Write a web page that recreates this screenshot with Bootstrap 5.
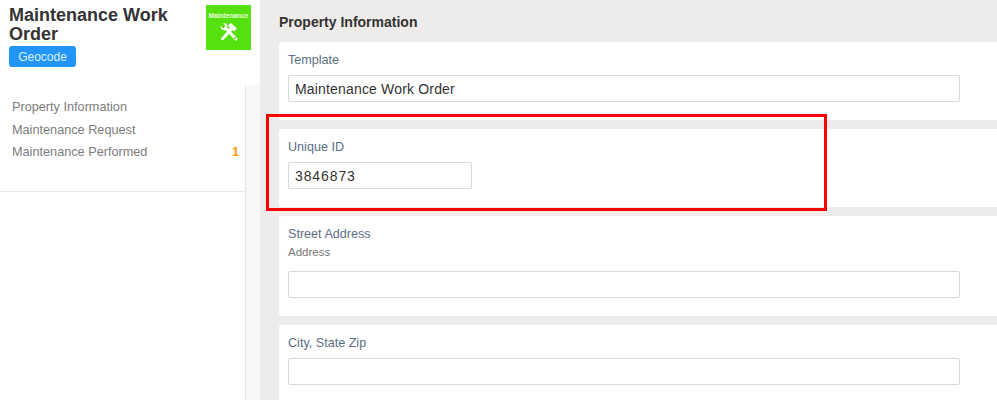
<!DOCTYPE html>
<html lang="en">
<head>
<meta charset="utf-8">
<title>Maintenance Work Order</title>
<link href="https://cdn.jsdelivr.net/npm/bootstrap@5.3.0/dist/css/bootstrap.min.css" rel="stylesheet">
<style>
html,body{height:400px;overflow:hidden;margin:0}
body{font-family:"Liberation Sans",Arial,sans-serif;background:#fff;color:#333;position:relative}
.shell{height:400px;width:997px;overflow:hidden}
.leftcol{width:260px;flex:none;background:#f7f7f7}
.headbox{height:85px;background:#fff;padding:6px 9px 0 9px}
.wo-title{font-size:18px;line-height:19px;font-weight:700;color:#333;margin:0;width:180px}
.geo-btn{background:#2196f8;color:#dcefff;font-size:12px;line-height:20px;height:21px;width:67px;border-radius:3px;padding:0;border:0;display:block;text-align:center;margin-top:2px}
.logo-tile{width:45px;height:45px;background:#55e00f;flex:none;margin:-1px 0 0 0;color:#eaffdc;text-align:center;font-size:6.6px;line-height:7px;font-weight:700;padding-top:7px;white-space:nowrap}
.logo-tile svg{display:block;margin:3px auto 0}
.sidearea{width:246px;height:315px;background:#fff;border-right:1px solid #e6e6e6}
.sidemenu{padding:15px 6px 0 9px;height:107px;border-bottom:1px solid #e9e9e9}
.sideitem{font-size:12.7px;line-height:15px;color:#7c7c7c;padding-left:3px;margin-bottom:7.5px}
.sidecount{color:#ff9800;font-weight:700}
.mainpane{background:#edecea;flex:1 1 auto;min-width:0;padding:14px 0 0 19px}
.pane-title{font-size:14px;line-height:17px;font-weight:700;color:#333;margin:0 0 11px 0}
.field-box{background:#fff;border-radius:3px 0 0 3px;padding:10px 37px 0 9px;margin-bottom:9px;height:78px}
.field-box.tall{height:100px}
.field-box.open{height:100px;margin-bottom:0}
.field-label{font-size:12.6px;line-height:16px;color:#5d6e86;margin-bottom:7px}
.field-sub{font-size:11.5px;line-height:14px;color:#777;margin:-4px 0 12px}
.field-input{display:block;width:100%;height:27px;border:1px solid #d9d9d9;border-radius:2px;background:#fff;padding:0 6px;font-size:14px;line-height:25px;color:#333;letter-spacing:.17px}
.field-input.short{width:184px;letter-spacing:.9px}
.redmark{position:absolute;left:266px;top:114px;width:561px;height:97px;border:3px solid #f00;pointer-events:none}
</style>
</head>
<body>
<div class="shell d-flex">
  <div class="leftcol">
    <div class="headbox d-flex justify-content-between">
      <div>
        <h1 class="wo-title">Maintenance Work Order</h1>
        <button type="button" class="btn geo-btn">Geocode</button>
      </div>
      <div class="logo-tile">Maintenance
        <svg width="20" height="20" viewBox="0 0 20 20" fill="none" stroke="#fff">
          <path d="M6.5 6 L17 17" stroke-width="3" stroke-linecap="round"/>
          <path d="M1.6 3.8 L4.5 6.4 L6.6 4.6 L4.2 1.5 C7 0.6 9 3 8.2 6 L6.2 8.2 C3.6 8.6 1.2 6.6 1.6 3.8 Z" fill="#fff" stroke="none"/>
          <path d="M3.5 16.8 L12.6 7" stroke-width="2.8" stroke-linecap="round"/>
          <path d="M8.6 3.6 L12 1 L17.8 6.6 L15.4 9.4 L13 7.6 L11.4 8.8 L9.6 6.8 L10.8 5.4 Z" fill="#fff" stroke="none"/>
          <circle cx="16" cy="16" r=".9" fill="#55e00f" stroke="none"/>
        </svg>
      </div>
    </div>
    <div class="sidearea">
      <div class="sidemenu">
        <div class="sideitem">Property Information</div>
        <div class="sideitem">Maintenance Request</div>
        <div class="sideitem d-flex justify-content-between"><span>Maintenance Performed</span><span class="sidecount">1</span></div>
      </div>
    </div>
  </div>
  <div class="mainpane">
    <h2 class="pane-title">Property Information</h2>
    <div class="field-box">
      <div class="field-label">Template</div>
      <input class="field-input" type="text" value="Maintenance Work Order" aria-label="Template">
    </div>
    <div class="field-box">
      <div class="field-label">Unique ID</div>
      <input class="field-input short" type="text" value="3846873" aria-label="Unique ID">
    </div>
    <div class="field-box tall">
      <div class="field-label">Street Address</div>
      <div class="field-sub">Address</div>
      <input class="field-input" type="text" aria-label="Address">
    </div>
    <div class="field-box open">
      <div class="field-label">City, State Zip</div>
      <input class="field-input" type="text" aria-label="City, State Zip">
    </div>
  </div>
</div>
<div class="redmark"></div>
<script src="https://cdn.jsdelivr.net/npm/bootstrap@5.3.0/dist/js/bootstrap.bundle.min.js"></script>
</body>
</html>
